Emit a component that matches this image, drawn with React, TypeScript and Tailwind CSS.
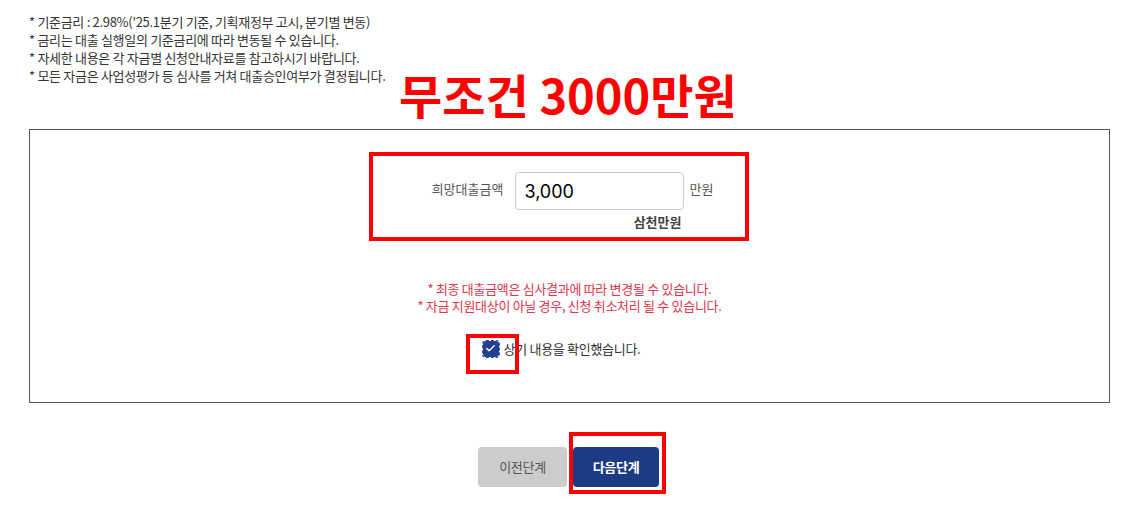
import { Check } from 'lucide-react'

const notes = [
  "* 기준금리 : 2.98%('25.1분기 기준, 기획재정부 고시, 분기별 변동)",
  '* 금리는 대출 실행일의 기준금리에 따라 변동될 수 있습니다.',
  '* 자세한 내용은 각 자금별 신청안내자료를 참고하시기 바랍니다.',
  '* 모든 자금은 사업성평가 등 심사를 거쳐 대출승인여부가 결정됩니다.',
]

const font = "font-['Noto_Sans_CJK_KR','Noto_Sans',sans-serif]"

export default function App() {
  return (
    <div className={`relative w-[1145px] h-[509px] bg-white ${font}`}>
      {/* notes */}
      <div className="pl-[29px] pt-[13px] text-[13px] leading-[18px] tracking-[-0.3px] text-[#333]">
        {notes.map((n) => (
          <p key={n}>{n}</p>
        ))}
      </div>

      {/* form box */}
      <div className="mx-[29px] mt-[44px] w-[1081px] h-[274px] border border-[#555] flex flex-col items-center pt-[42px]">
        <div className="flex items-center ml-[6px]">
          <span className="text-[13px] text-[#555] tracking-[0px] mr-[12px] -mt-[5px]">희망대출금액</span>
          <div className="w-[169px] h-[38px] border border-[#ccc] rounded-[4px] flex items-center pl-[8px] text-[18px] text-black font-['Inter',sans-serif]">
            3,000
          </div>
          <span className="text-[13px] text-[#555] ml-[5px] -mt-[5px]">만원</span>
        </div>
        <div className="w-[284px] flex justify-end pr-[30px] mt-[3px]">
          <span className="text-[13px] font-bold text-[#444] leading-[18px]">삼천만원</span>
        </div>

        <div className="mt-[49px] text-center text-[13px] leading-[17px] tracking-[-0.3px] text-[#e5344a]">
          <p>* 최종 대출금액은 심사결과에 따라 변경될 수 있습니다.</p>
          <p>* 자금 지원대상이 아닐 경우, 신청 취소처리 될 수 있습니다.</p>
        </div>

        <label className="mt-[25px] mr-[16px] flex items-center gap-[5px] text-[13px] text-[#333] tracking-[-0.3px]">
          <span className="w-[16px] h-[16px] rounded-[3px] bg-[#233f8f] outline outline-dashed outline-[#2d4bb0] outline-offset-0 flex items-center justify-center">
            <Check size={11} strokeWidth={3} className="text-white" />
          </span>
          상기 내용을 확인했습니다.
        </label>
      </div>

      {/* buttons */}
      <div className="flex justify-center gap-[6px] mt-[44px] pr-[8px]">
        <button className="w-[89px] h-[40px] rounded-[4px] bg-[#ccc] text-[13px] text-[#555] tracking-[-0.3px]">이전단계</button>
        <button className="w-[86px] h-[40px] rounded-[4px] bg-[#1c3b85] text-[13px] font-bold text-white tracking-[-0.3px]">다음단계</button>
      </div>

      {/* annotations */}
      <div className="absolute left-[399px] top-[60px] text-[47px] font-bold leading-[68px] text-[#ff0000]">
        무조건 3000만원
      </div>
      <div className="absolute left-[369px] top-[152px] w-[380px] h-[89px] border-[4px] border-[#ff0000]" />
      <div className="absolute left-[466px] top-[334px] w-[53px] h-[40px] border-[4px] border-[#ff0000]" />
      <div className="absolute left-[569px] top-[432px] w-[97px] h-[62px] border-[4px] border-[#ff0000]" />
    </div>
  )
}
